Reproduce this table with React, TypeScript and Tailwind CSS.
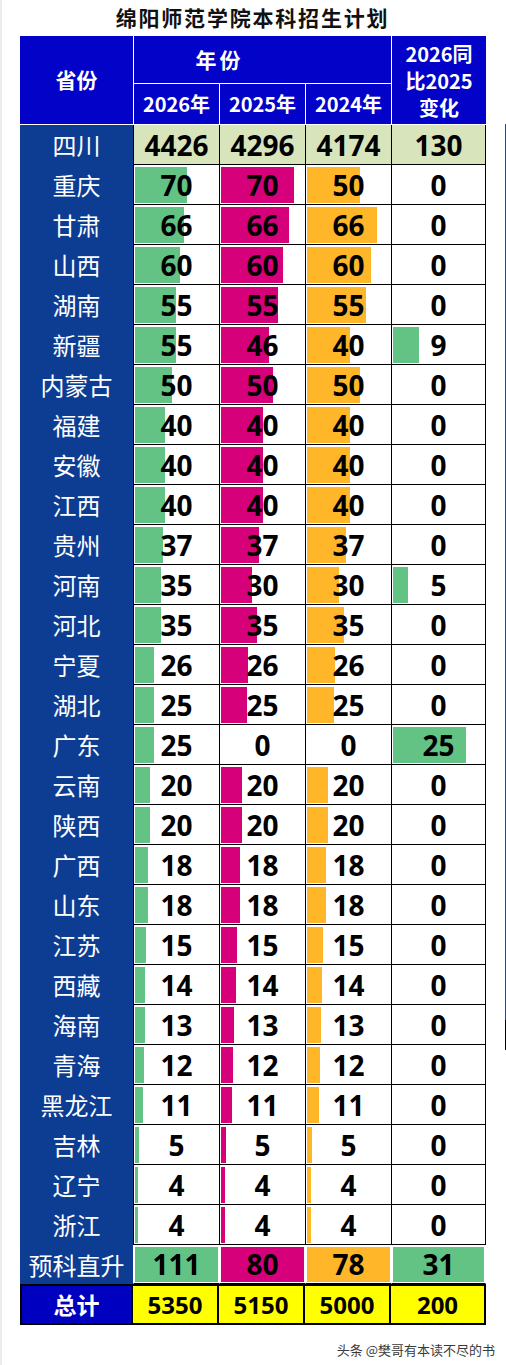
import React from 'react';
import clsx from 'clsx';

type Row = [string, number, number, number, number];

const rows: Row[] = [
  ['重庆', 70, 70, 50, 0],
  ['甘肃', 66, 66, 66, 0],
  ['山西', 60, 60, 60, 0],
  ['湖南', 55, 55, 55, 0],
  ['新疆', 55, 46, 40, 9],
  ['内蒙古', 50, 50, 50, 0],
  ['福建', 40, 40, 40, 0],
  ['安徽', 40, 40, 40, 0],
  ['江西', 40, 40, 40, 0],
  ['贵州', 37, 37, 37, 0],
  ['河南', 35, 30, 30, 5],
  ['河北', 35, 35, 35, 0],
  ['宁夏', 26, 26, 26, 0],
  ['湖北', 25, 25, 25, 0],
  ['广东', 25, 0, 0, 25],
  ['云南', 20, 20, 20, 0],
  ['陕西', 20, 20, 20, 0],
  ['广西', 18, 18, 18, 0],
  ['山东', 18, 18, 18, 0],
  ['江苏', 15, 15, 15, 0],
  ['西藏', 14, 14, 14, 0],
  ['海南', 13, 13, 13, 0],
  ['青海', 12, 12, 12, 0],
  ['黑龙江', 11, 11, 11, 0],
  ['吉林', 5, 5, 5, 0],
  ['辽宁', 4, 4, 4, 0],
  ['浙江', 4, 4, 4, 0],
];

const prep: number[] = [111, 80, 78, 31];
const totals: number[] = [5350, 5150, 5000, 200];

// data bar scale: largest value in each column fills the cell
const cols = [
  { max: 111, w: 83, bar: 'bg-[#63C384]' },
  { max: 80, w: 83, bar: 'bg-[#D6007B]' },
  { max: 78, w: 83, bar: 'bg-[#FFB628]' },
  { max: 31, w: 91, bar: 'bg-[#63C384]' },
];

const grid = 'grid grid-cols-[113px_86px_86px_86px_95px]';
const num = "font-['Open_Sans','Noto_Sans_CJK_SC',sans-serif] font-bold text-black leading-none";
const cjk = "font-['Noto_Sans_CJK_SC',sans-serif]";

function BarCell({ value, col, border = 'border-black', h = 'h-[40px]' }: { value: number; col: number; border?: string; h?: string }) {
  const c = cols[col];
  const width = Math.round((value / c.max) * c.w);
  return (
    <div className={clsx('relative flex items-center justify-center border-l border-b', border, h, col === 3 && 'border-r')}>
      {value > 0 && (
        <div className={clsx('absolute left-px top-[2px] bottom-px', c.bar)} style={{ width }} />
      )}
      <span className={clsx('relative text-[28px]', num)}>{value}</span>
    </div>
  );
}

function Province({ name, h = 'h-[40px]' }: { name: string; h?: string }) {
  return (
    <div className={clsx('flex items-center justify-center bg-[#0C3D93] text-white text-[24px] leading-none', cjk, h)}>
      {name}
    </div>
  );
}

export default function App() {
  return (
    <div className="flex w-[506px] h-[1365px] bg-white">
      <div className="w-[2px] bg-[#ebebeb]" />
      <div className="w-[503px] flex flex-col">
        <div className={clsx('h-[36px] flex items-center justify-center text-[21px] font-bold tracking-[1.8px] text-[#111] pr-[2px]', cjk)}>
          绵阳师范学院本科招生计划
        </div>

        <div className="ml-[18px] w-[466px]">
          {/* header */}
          <div className={clsx(grid, 'grid-rows-[48px_40px] bg-[#0202C8] text-white font-bold', cjk)}>
            <div className="row-span-2 flex items-center justify-center text-[21px]">省份</div>
            <div className="col-span-3 flex items-center justify-center border-l border-b border-white pr-[86px] text-[21px] tracking-[3px]">年份</div>
            <div className="row-span-2 flex flex-col items-center justify-center border-l border-white text-[20px] leading-[27px]">
              <span>2026同</span>
              <span>比2025</span>
              <span>变化</span>
            </div>
            <div className="flex items-center justify-center border-l border-white text-[20px]">2026年</div>
            <div className="flex items-center justify-center border-l border-white text-[20px]">2025年</div>
            <div className="flex items-center justify-center border-l border-white text-[20px]">2024年</div>
          </div>
          <div className="h-px bg-white" />

          {/* 四川 */}
          <div className={grid}>
            <Province name="四川" />
            {[4426, 4296, 4174, 130].map((v, i) => (
              <div
                key={i}
                className={clsx('h-[40px] flex items-center justify-center bg-[#D8E4BC] border-l border-b border-black', i === 3 && 'border-r')}
              >
                <span className={clsx('text-[28px]', num)}>{v}</span>
              </div>
            ))}
          </div>

          {rows.map(([name, a, b, c, d]) => (
            <div key={name} className={grid}>
              <Province name={name} />
              <BarCell value={a} col={0} />
              <BarCell value={b} col={1} />
              <BarCell value={c} col={2} />
              <BarCell value={d} col={3} />
            </div>
          ))}

          {/* 预科直升 */}
          <div className={grid}>
            <Province name="预科直升" h="h-[39px]" />
            {prep.map((v, i) => (
              <BarCell key={i} value={v} col={i} border="border-white border-b-black" h="h-[39px]" />
            ))}
          </div>

          {/* 总计 */}
          <div className={clsx(grid, 'h-[41px]')}>
            <div className={clsx('flex items-center justify-center bg-[#0000C0] border-2 border-black text-white text-[23px] font-bold', cjk)}>
              总计
            </div>
            {totals.map((v, i) => (
              <div key={i} className="flex items-center justify-center bg-[#FFFF00] border-y-2 border-r-2 border-black">
                <span className={clsx('text-[24px]', num)}>{v}</span>
              </div>
            ))}
          </div>
        </div>

        <div className={clsx('mt-[15px] pr-[10px] text-right text-[13px] text-[#3a3a3a]', cjk)}>
          头条 @樊哥有本读不尽的书
        </div>
      </div>
      <div className="w-px flex flex-col">
        <div className="h-[124px]" />
        <div className="h-[896px] bg-[#2b4a70]" />
        <div className="h-[30px] bg-black" />
      </div>
    </div>
  );
}
